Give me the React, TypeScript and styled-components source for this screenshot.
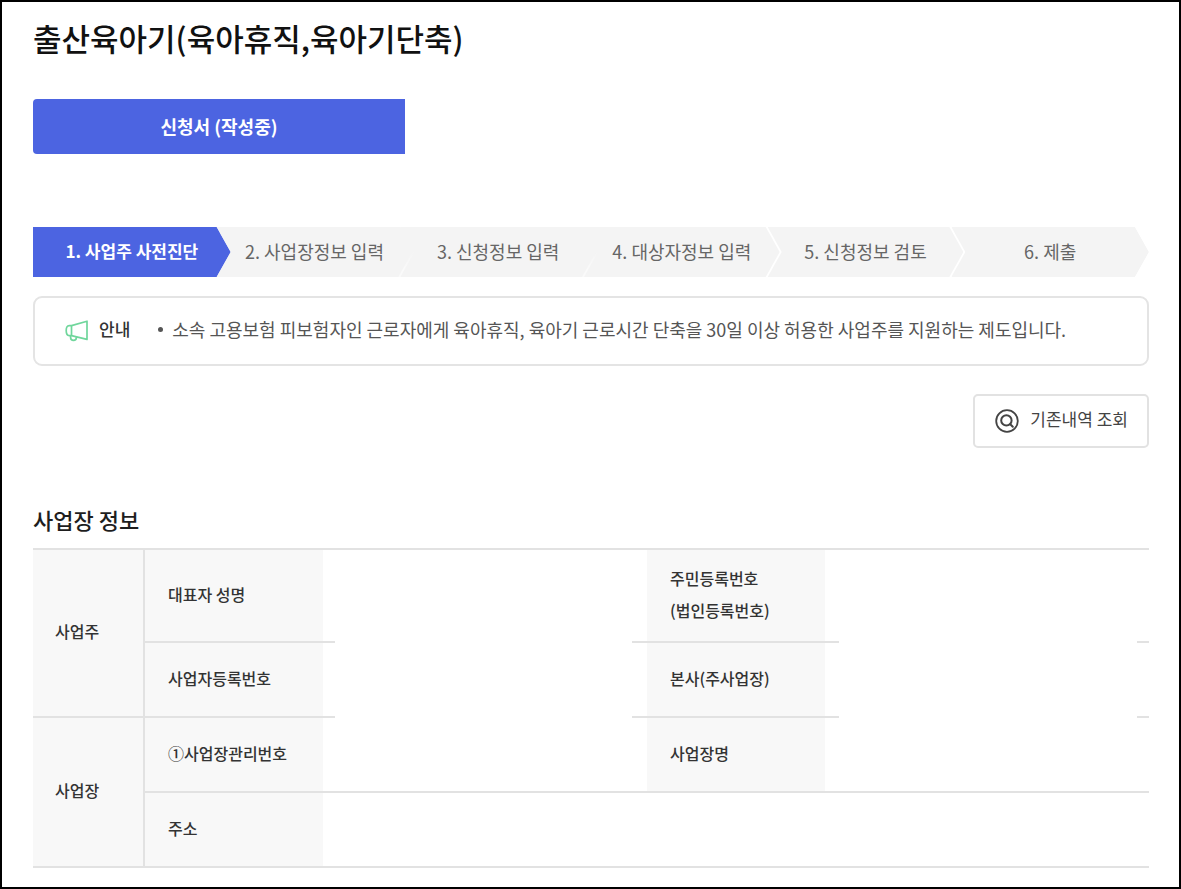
import React from "react";
import styled, { createGlobalStyle } from "styled-components";

const GlobalStyle = createGlobalStyle`
  *, *::before, *::after { box-sizing: border-box; }
  body {
    margin: 0;
    background: #fff;
    color: #1e1e1e;
    font-family: "Noto Sans CJK KR", "Noto Sans", sans-serif;
  }
  button { font-family: inherit; cursor: pointer; }
`;

const Page = styled.main`
  min-height: 100vh;
  padding: 12px 30px 18px 31px;
  border: 2px solid #000;
  display: flex;
  flex-direction: column;
`;

const PageTitle = styled.h1`
  margin: 0;
  font-size: 31px;
  line-height: 48px;
  font-weight: 500;
  color: #111;
`;

const TabList = styled.div`
  display: flex;
  margin-top: 37px;
`;

const Tab = styled.button`
  width: 33.33%;
  height: 55px;
  padding: 0 0 2px;
  border: 0;
  border-radius: 4px 0 0 4px;
  background: #4c64e1;
  color: #fff;
  font-size: 18px;
  line-height: 24px;
  font-weight: 700;
`;

const Steps = styled.ol`
  display: flex;
  margin: 73px 0 0;
  padding: 0 0 0 14px;
  list-style: none;
`;

type Seam = "none" | "lower" | "full";

const seamFill: Record<Seam, string> = {
  none: "transparent",
  lower: "linear-gradient(#f4f4f4 50%, #fafafa 85%)",
  full: "#fff",
};

const Step = styled.li<{ $seam: Seam; $order: number }>`
  position: relative;
  z-index: ${(p) => 10 - p.$order};
  flex: 1 1 0;
  margin-left: -14px;
  background: ${(p) => seamFill[p.$seam]};
  clip-path: polygon(0 0, calc(100% - 14px) 0, 100% 50%, calc(100% - 14px) 100%, 0 100%);
`;

const StepLabel = styled.span<{ $current: boolean; $inset: boolean }>`
  display: flex;
  align-items: center;
  justify-content: center;
  height: 50px;
  margin-right: ${(p) => (p.$inset ? 2 : 0)}px;
  padding-bottom: 2px;
  background: ${(p) => (p.$current ? "#4c64e1" : "#f4f4f4")};
  color: ${(p) => (p.$current ? "#fff" : "#666")};
  font-size: ${(p) => (p.$current ? 17 : 18)}px;
  line-height: 24px;
  font-weight: ${(p) => (p.$current ? 700 : 400)};
  white-space: nowrap;
  clip-path: polygon(0 0, calc(100% - 14px) 0, 100% 50%, calc(100% - 14px) 100%, 0 100%);
`;

const Notice = styled.section`
  display: flex;
  align-items: center;
  min-height: 70px;
  margin-top: 19px;
  padding: 0 30px;
  border: 2px solid #e4e4e4;
  border-radius: 9px;
`;

const NoticeTitle = styled.strong`
  margin-left: 10px;
  padding-bottom: 4px;
  font-size: 17px;
  line-height: 24px;
  font-weight: 500;
  color: #333;
`;

const NoticeList = styled.ul`
  margin: 0 0 0 28px;
  padding: 0 0 4px;
  list-style: none;
`;

const NoticeItem = styled.li`
  display: flex;
  align-items: center;
  gap: 9px;
  font-size: 18px;
  line-height: 24px;
  color: #555;

  &::before {
    content: "";
    flex: none;
    width: 5px;
    height: 5px;
    border-radius: 50%;
    background: #555;
  }
`;

const Actions = styled.div`
  display: flex;
  justify-content: flex-end;
  margin-top: 28px;
`;

const LookupButton = styled.button`
  display: flex;
  align-items: center;
  gap: 11px;
  height: 54px;
  padding: 0 19px 0 20px;
  border: 2px solid #e2e2e2;
  border-radius: 5px;
  background: #fff;
  color: #444;
  font-size: 17px;
  line-height: 24px;
`;

const LookupText = styled.span`
  padding-bottom: 4px;
`;

const SectionTitle = styled.h2`
  margin: 55px 0 13px;
  font-size: 22px;
  line-height: 32px;
  font-weight: 500;
  color: #1e1e1e;
`;

const InfoTable = styled.table`
  width: 100%;
  table-layout: fixed;
  border-collapse: separate;
  border-spacing: 0;
  border-top: 2px solid #e2e2e2;
  font-size: 16px;
  line-height: 32px;
`;

const Col = styled.col<{ $width?: number }>`
  width: ${(p) => (p.$width ? `${p.$width}px` : "auto")};
`;

const Row = styled.tr<{ $tall?: boolean }>`
  height: ${(p) => (p.$tall ? 93 : 75)}px;
`;

const HeadCell = styled.th<{ $group?: boolean }>`
  padding: 0 22px 4px ${(p) => (p.$group ? 22 : 23)}px;
  border-bottom: 2px solid #e2e2e2;
  border-right: ${(p) => (p.$group ? "2px solid #e2e2e2" : "0")};
  background: #f8f8f8;
  color: #333;
  font-weight: 500;
  text-align: left;
  vertical-align: middle;
  white-space: nowrap;
`;

const ValueCell = styled.td`
  position: relative;
  padding: 0;
  border-bottom: 2px solid #e2e2e2;
`;

const Mask = styled.span<{ $last?: boolean }>`
  position: absolute;
  inset: ${(p) => (p.$last ? "0 12px -2px 14px" : "0 15px -2px 12px")};
  background: #fff;
`;

function MegaphoneIcon() {
  return (
    <svg width="24" height="24" viewBox="0 0 24 24" fill="none" stroke="#70d69c" strokeWidth="1.7" strokeLinejoin="round" aria-hidden="true">
      <path d="M6.5 6.6 22 2.2v18.2L6.5 16.6H4.2C2.2 16.6 1.2 15 1.2 11.6S2.2 6.6 4.2 6.6Z" />
      <path d="M6.500 6.600v10" />
      <path d="M5.600 16.800v1.700a2.900 2.900 0 0 0 5.800 0v-.7" />
    </svg>
  );
}

function LookupIcon() {
  return (
    <svg width="24" height="24" viewBox="0 0 24 24" fill="none" stroke="#444" strokeLinecap="round" aria-hidden="true">
      <circle cx="12" cy="12" r="10.8" strokeWidth="1.8" />
      <circle cx="11.4" cy="11.4" r="5.2" strokeWidth="2" />
      <path d="m15.300 15.300 2.500 2.500" strokeWidth="2" />
    </svg>
  );
}

const steps: { label: string; seam: Seam }[] = [
  { label: "1. 사업주 사전진단", seam: "none" },
  { label: "2. 사업장정보 입력", seam: "lower" },
  { label: "3. 신청정보 입력", seam: "lower" },
  { label: "4. 대상자정보 입력", seam: "full" },
  { label: "5. 신청정보 검토", seam: "full" },
  { label: "6. 제출", seam: "none" },
];

export default function App() {
  return (
    <>
      <GlobalStyle />
      <Page>
        <PageTitle>출산육아기(육아휴직,육아기단축)</PageTitle>
        <TabList>
          <Tab type="button">신청서 (작성중)</Tab>
        </TabList>
        <Steps>
          {steps.map((step, i) => (
            <Step key={step.label} $seam={step.seam} $order={i} aria-current={i === 0 ? "step" : undefined}>
              <StepLabel $current={i === 0} $inset={step.seam !== "none"}>{step.label}</StepLabel>
            </Step>
          ))}
        </Steps>
        <Notice>
          <MegaphoneIcon />
          <NoticeTitle>안내</NoticeTitle>
          <NoticeList>
            <NoticeItem>
              소속 고용보험 피보험자인 근로자에게 육아휴직, 육아기 근로시간 단축을 30일 이상 허용한 사업주를 지원하는 제도입니다.
            </NoticeItem>
          </NoticeList>
        </Notice>
        <Actions>
          <LookupButton type="button">
            <LookupIcon />
            <LookupText>기존내역 조회</LookupText>
          </LookupButton>
        </Actions>
        <SectionTitle id="workplace-title">사업장 정보</SectionTitle>
        <InfoTable aria-labelledby="workplace-title">
          <colgroup>
            <Col $width={112} />
            <Col $width={178} />
            <Col />
            <Col $width={178} />
            <Col />
          </colgroup>
          <tbody>
            <Row $tall>
              <HeadCell $group scope="rowgroup" rowSpan={2}>사업주</HeadCell>
              <HeadCell scope="row">대표자 성명</HeadCell>
              <ValueCell><Mask /></ValueCell>
              <HeadCell scope="row">주민등록번호<br />(법인등록번호)</HeadCell>
              <ValueCell><Mask $last /></ValueCell>
            </Row>
            <Row>
              <HeadCell scope="row">사업자등록번호</HeadCell>
              <ValueCell><Mask /></ValueCell>
              <HeadCell scope="row">본사(주사업장)</HeadCell>
              <ValueCell><Mask $last /></ValueCell>
            </Row>
            <Row>
              <HeadCell $group scope="rowgroup" rowSpan={2}>사업장</HeadCell>
              <HeadCell scope="row">①사업장관리번호</HeadCell>
              <ValueCell />
              <HeadCell scope="row">사업장명</HeadCell>
              <ValueCell />
            </Row>
            <Row>
              <HeadCell scope="row">주소</HeadCell>
              <ValueCell colSpan={3} />
            </Row>
          </tbody>
        </InfoTable>
      </Page>
    </>
  );
}
